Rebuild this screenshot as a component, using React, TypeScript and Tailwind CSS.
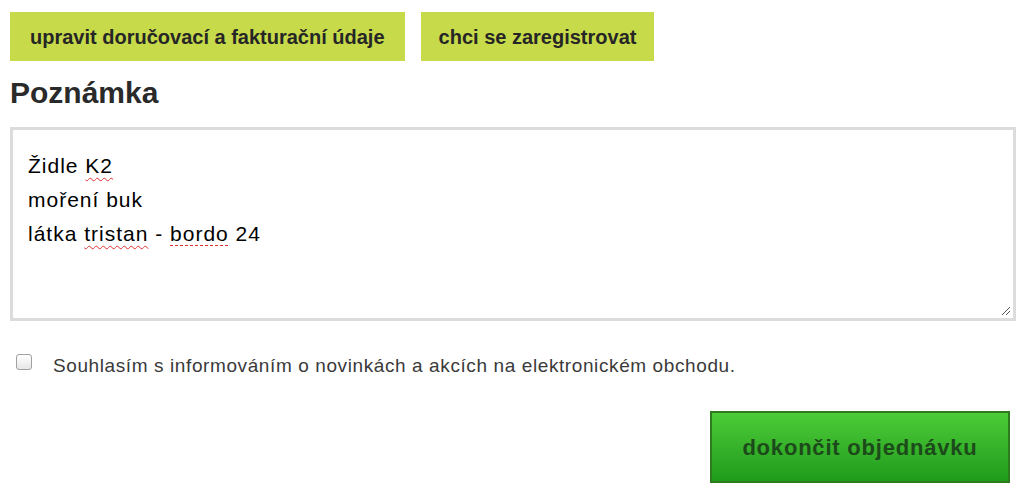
const font = { fontFamily: '"Liberation Sans", Arial, sans-serif' };

const Squiggle = ({ children }: { children: React.ReactNode }) => (
    <span className="underline decoration-wavy decoration-[#e03030] decoration-1 underline-offset-[4px]">{children}</span>
);

export default function App() {
    return (
        <div className="bg-white w-[1018px] h-[497px] px-[10px] pt-[12px]" style={font}>
            <div className="flex gap-[16px]">
                <button className="h-[49px] px-[20px] bg-[#c6da4a] text-[#262626] font-bold text-[20px]">
                    upravit doručovací a fakturační údaje
                </button>
                <button className="h-[49px] px-[18px] bg-[#c6da4a] text-[#262626] font-bold text-[20px]">
                    chci se zaregistrovat
                </button>
            </div>

            <h2 className="mt-[14px] text-[30px] font-bold text-[#2a2a2a] leading-[36px]">Poznámka</h2>

            <div className="relative mt-[16px] mr-[-8px] h-[194px] border-[3px] border-[#dcdcdc] bg-white pl-[15px] pt-[19px] text-[21px] tracking-[1px] leading-[34px] text-black">
                <div>Židle <Squiggle>K2</Squiggle></div>
                <div>moření buk</div>
                <div>látka <Squiggle>tristan</Squiggle> - <span className="underline decoration-dashed decoration-[#e03030] decoration-1 underline-offset-[4px]">bordo</span> 24</div>
                <svg className="absolute right-[2px] bottom-[2px]" width="10" height="10" viewBox="0 0 10 10">
                    <line x1="9" y1="1" x2="1" y2="9" stroke="#555" strokeWidth="1" />
                    <line x1="9" y1="5" x2="5" y2="9" stroke="#555" strokeWidth="1" />
                </svg>
            </div>

            <label className="mt-[33px] flex items-start gap-[21px] pl-[6px] text-[19px] tracking-[0.6px] leading-[24px] text-[#3a3a3a]">
                <span className="w-[16px] h-[16px] shrink-0 rounded-[3px] border border-[#a0a0a0] bg-gradient-to-b from-white to-[#e6e6e6]"></span>
                Souhlasím s informováním o novinkách a akcích na elektronickém obchodu.
            </label>

            <div className="flex justify-end mt-[33px]">
                <button className="w-[300px] h-[72px] mr-[-2px] border-2 border-[#2e7a1e] bg-gradient-to-b from-[#4ccb38] to-[#1f9b1c] text-[#1c4a1a] font-bold text-[22px] tracking-[0.8px]">
                    dokončit objednávku
                </button>
            </div>
        </div>
    );
}
